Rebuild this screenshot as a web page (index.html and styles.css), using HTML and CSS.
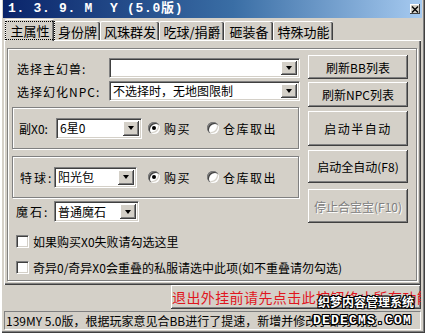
FILE: index.html
```html
<!doctype html>
<html lang="zh-CN">
  <head>
    <meta charset="UTF-8" />
    <meta name="viewport" content="width=device-width, initial-scale=1.0" />
    <title>139MY 5.0</title>
    <link rel="stylesheet" href="styles.css">
  </head>
  <body>
    <div class="window">
      <div class="titlebar">
        <div class="title">1. 3. 9. M  Y (5.0版)</div>
        <div class="close">
          <svg viewBox="0 0 8 7" width="8" height="7">
            <path d="M1 0.5L7 6.5M7 0.5L1 6.5" stroke="#000" stroke-width="1.4" fill="none" />
          </svg>
        </div>
      </div>

      <div class="tabs">
        <div class="tab tab-main active"><span class="focus">主属性</span></div>
        <div class="tab tab-id">身份牌</div>
        <div class="tab tab-send">风珠群发</div>
        <div class="tab tab-ball">吃球/捐爵</div>
        <div class="tab tab-equip">砸装备</div>
        <div class="tab tab-special">特殊功能</div>
      </div>

      <div class="panel">
        <div class="frame">
          <div class="left">
            <div class="row">
              <label class="lbl">选择主幻兽:</label>
              <div class="combo combo-wide">
                <span class="val"></span>
                <span class="drop"><i class="arrow"></i></span>
              </div>
            </div>
            <div class="row row-npc">
              <label class="lbl">选择幻化NPC:</label>
              <div class="combo combo-wide">
                <span class="val">不选择时，无地图限制</span>
                <span class="drop"><i class="arrow"></i></span>
              </div>
            </div>

            <div class="group group-x0">
              <label class="glbl glbl-x0">副X0:</label>
              <div class="combo combo-x0">
                <span class="val">6星0</span>
                <span class="drop"><i class="arrow"></i></span>
              </div>
              <div class="radios">
                <div class="opt opt-buy"><span class="radio checked"></span>购买</div>
                <div class="opt"><span class="radio"></span>仓库取出</div>
              </div>
            </div>

            <div class="group group-ball">
              <label class="glbl glbl-ball">特球:</label>
              <div class="combo combo-ball">
                <span class="val">阳光包</span>
                <span class="drop"><i class="arrow"></i></span>
              </div>
              <div class="radios">
                <div class="opt opt-buy"><span class="radio checked"></span>购买</div>
                <div class="opt"><span class="radio"></span>仓库取出</div>
              </div>
            </div>

            <div class="row row-stone">
              <label class="glbl glbl-stone">魔石:</label>
              <div class="combo combo-stone">
                <span class="val">普通魔石</span>
                <span class="drop"><i class="arrow"></i></span>
              </div>
            </div>

            <div class="check"><span class="box"></span>如果购买X0失败请勾选这里</div>
            <div class="check"><span class="box"></span>奇异0/奇异X0会重叠的私服请选中此项(如不重叠请勿勾选)</div>
          </div>

          <div class="right">
            <div class="btn btn-bb">刷新BB列表</div>
            <div class="btn btn-npc">刷新NPC列表</div>
            <div class="btn btn-half">启动半自动</div>
            <div class="btn btn-full">启动全自动(F8)</div>
            <div class="btn btn-stop disabled">停止合宝宝(F10)</div>
          </div>
        </div>
      </div>

      <div class="bottom">
        <div class="btn quit">退出外挂前请先点击此按钮终止所有功能</div>
      </div>

      <div class="status">139MY 5.0版，根据玩家意见合BB进行了提速，新增并修改了部分功能</div>

      <div class="watermark">
        <div class="wm-cn">织梦内容管理系统</div>
        <div class="wm-en">DEDECMS.COM</div>
      </div>
    </div>
  </body>
</html>
```

FILE: styles.css
```css
* {
  margin: 0;
  padding: 0;
  box-sizing: border-box;
}

body {
  width: 425px;
  height: 333px;
  overflow: hidden;
  background: #d4d0c8;
  color: #000;
  font-family: 'Noto Sans CJK SC', sans-serif;
  font-size: 12px;
}

.window {
  position: relative;
  width: 425px;
  height: 333px;
  padding: 0 3px 3px;
  background: #d4d0c8;
  box-shadow: inset 2px 0 0 #fff, inset -1px -1px 0 #404040, inset -2px -2px 0 #808080;
}

/* title bar */
.titlebar {
  height: 18px;
  display: flex;
  align-items: center;
  justify-content: space-between;
  padding: 0 2px 0 5px;
  background: linear-gradient(90deg, #0a246a 0%, #3a6ea5 55%, #a6caf0 100%);
  color: #fff;
}

.title {
  font-family: 'Liberation Mono', 'Noto Sans CJK SC', monospace;
  font-weight: 700;
  font-size: 13px;
  letter-spacing: 0.7px;
  white-space: pre;
  line-height: 18px;
}

.close {
  width: 10px;
  height: 10px;
  display: flex;
  align-items: center;
  justify-content: center;
  background: #d4d0c8;
  box-shadow: inset -1px -1px 0 #404040, inset 1px 1px 0 #fff;
}

/* tabs */
.tabs {
  display: flex;
  align-items: flex-end;
  height: 21px;
  margin-top: 1px;
  padding-left: 2px;
}

.tab {
  height: 19px;
  display: flex;
  align-items: center;
  justify-content: center;
  font-size: 13px;
  line-height: 17px;
  border-top: 1px solid #fff;
  border-left: 1px solid #fff;
  border-radius: 2px 2px 0 0;
  box-shadow: inset -1px 0 0 #404040, inset -2px 0 0 #808080;
}

.tab.active {
  position: relative;
  z-index: 1;
  height: 22px;
  margin-bottom: -1px;
  background: #d4d0c8;
}

.focus {
  padding: 0 4px;
  outline: 1px dotted #000;
  line-height: 17px;
}

.tab-main { width: 49px; }
.tab-id { width: 46px; }
.tab-send { width: 59px; }
.tab-ball { width: 65px; }
.tab-equip { width: 49px; }
.tab-special { width: 60px; }

/* main panel */
.panel {
  height: 245px;
  margin: 0 1px;
  padding: 7px 0 0 2px;
  border-top: 1px solid #fff;
  border-left: 1px solid #fff;
  box-shadow: inset -1px -1px 0 #404040, inset -2px -2px 0 #808080;
}

.frame {
  display: flex;
  width: 410px;
  height: 233px;
  border: 1px solid #808080;
  box-shadow: 1px 1px 0 #fff, inset 1px 1px 0 #fff;
}

.left {
  width: 288px;
  margin: 9px 0 0 4px;
}

.right {
  width: 100px;
  margin: 6px 0 0 8px;
}

.row {
  display: flex;
  align-items: center;
  height: 20px;
}

.row-npc {
  margin-top: 3px;
}

.lbl {
  width: 97px;
  padding-left: 5px;
  letter-spacing: 1px;
  white-space: nowrap;
}

/* combo boxes */
.combo {
  display: flex;
  align-items: center;
  flex: none;
  height: 100%;
  padding: 2px;
  background: #fff;
  border: 1px solid;
  border-color: #808080 #fff #fff #808080;
  box-shadow: inset 1px 1px 0 #404040, inset -1px -1px 0 #d4d0c8;
}

.combo .val {
  flex: 1;
  padding-left: 1px;
  white-space: nowrap;
  overflow: hidden;
  line-height: 16px;
}

.drop {
  width: 16px;
  height: 100%;
  display: flex;
  align-items: center;
  justify-content: center;
  background: #d4d0c8;
  box-shadow: inset -1px -1px 0 #404040, inset 1px 1px 0 #fff, inset -2px -2px 0 #808080;
}

.arrow {
  width: 0;
  height: 0;
  border-left: 3.5px solid transparent;
  border-right: 3.5px solid transparent;
  border-top: 4px solid #000;
}

.combo-wide { width: 191px; }
.combo-x0 { width: 86px; height: 21px; }
.combo-ball { width: 83px; height: 21px; }
.combo-stone { width: 85px; height: 21px; }

/* group boxes */
.group {
  display: flex;
  align-items: center;
  width: 287px;
  height: 42px;
  border: 1px solid #808080;
  box-shadow: 1px 1px 0 #fff, inset 1px 1px 0 #fff;
}

.group-x0 {
  margin-top: 6px;
  padding-left: 6px;
}

.group-ball {
  margin-top: 7px;
  padding-left: 7px;
}

.glbl {
  flex: none;
  letter-spacing: 2px;
  white-space: nowrap;
}

.glbl-x0 { width: 37px; letter-spacing: 0; }
.glbl-ball { width: 34px; }
.glbl-stone { width: 42px; padding-left: 4px; }

.radios {
  display: flex;
  align-items: center;
}

.group-x0 .radios { margin-left: 6px; }
.group-ball .radios { margin-left: 11px; }

.opt {
  display: flex;
  align-items: center;
  gap: 4px;
  letter-spacing: 1.5px;
  white-space: nowrap;
}

.opt-buy {
  width: 59px;
}

.radio {
  position: relative;
  flex: none;
  width: 12px;
  height: 12px;
  border-radius: 50%;
  background: #fff;
  box-shadow: inset 1px 1px 0 #808080, inset 2px 2px 0 #404040, inset -1px -1px 0 #fff, inset -2px -2px 0 #d4d0c8;
}

.radio.checked::after {
  content: '';
  position: absolute;
  left: 4px;
  top: 4px;
  width: 4px;
  height: 4px;
  border-radius: 50%;
  background: #000;
}

.row-stone {
  height: 21px;
  margin-top: 3px;
}

/* check boxes */
.check {
  display: flex;
  align-items: center;
  gap: 4px;
  height: 13px;
  margin-top: 13px;
  padding-left: 4px;
  white-space: nowrap;
}

.box {
  width: 13px;
  height: 13px;
  flex: none;
  background: #fff;
  border: 1px solid;
  border-color: #808080 #fff #fff #808080;
  box-shadow: inset 1px 1px 0 #404040, inset -1px -1px 0 #d4d0c8;
}

/* buttons */
.btn {
  display: flex;
  align-items: center;
  justify-content: center;
  width: 100px;
  background: #d4d0c8;
  white-space: nowrap;
  box-shadow: inset -1px -1px 0 #404040, inset 1px 1px 0 #fff, inset -2px -2px 0 #808080;
}

.btn-bb { height: 24px; }
.btn-npc { height: 25px; margin-top: 3px; }
.btn-half { height: 35px; margin-top: 4px; letter-spacing: 1.5px; }
.btn-full { height: 33px; margin-top: 4px; }
.btn-stop { height: 34px; margin-top: 6px; }

.btn.disabled {
  color: #808080;
  text-shadow: 1px 1px 0 #fff;
}

/* bottom bar */
.bottom {
  display: flex;
  justify-content: flex-end;
  height: 24px;
  margin: 0 1px;
}

.quit {
  width: 250px;
  height: 24px;
  justify-content: flex-start;
  padding-left: 1px;
  overflow: hidden;
  color: #e0161e;
  font-size: 14px;
  letter-spacing: 0.4px;
}

.status {
  height: 19px;
  margin: 2px 1px 0;
  padding-left: 1px;
  border: 1px solid;
  border-color: #808080 #fff #fff #808080;
  line-height: 17px;
  white-space: nowrap;
  overflow: hidden;
}

/* watermark over the corner */
.watermark {
  position: absolute;
  left: 313px;
  top: 294px;
  color: #fff;
  font-weight: 700;
  text-shadow: 1px 0 0 #000, -1px 0 0 #000, 0 1px 0 #000, 0 -1px 0 #000, 1px 1px 0 #000, -1px -1px 0 #000, 1px -1px 0 #000, -1px 1px 0 #000;
}

.wm-cn {
  padding-left: 5px;
  font-size: 12px;
  line-height: 16px;
}

.wm-en {
  margin-top: 3px;
  font-family: 'Liberation Mono', monospace;
  font-size: 13px;
  letter-spacing: 1.2px;
  line-height: 15px;
}
```
